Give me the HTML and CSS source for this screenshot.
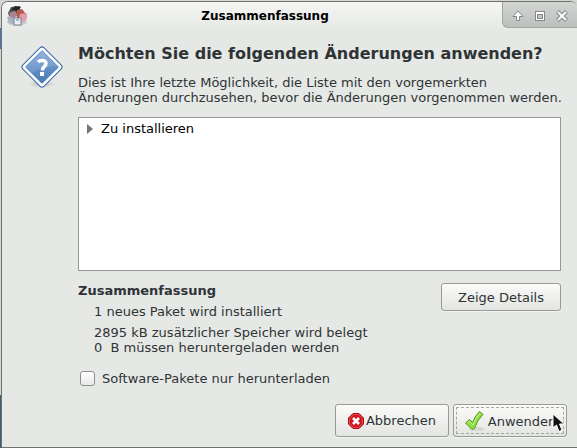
FILE: index.html
```html
<!DOCTYPE html>
<html lang="de">
<head>
  <meta charset="utf-8">
  <title>Zusammenfassung</title>
  <link rel="stylesheet" href="styles.css">
</head>
<body>

<div class="window">
  <header class="titlebar">
    <svg class="app-icon" width="22" height="22" viewBox="0 0 22 22">
      <ellipse cx="11" cy="17" rx="10" ry="4" fill="#c9cccf"/>
      <path d="M1 12 L6 10 L11 13 L11 20 L3 18Z" fill="#a9b3c4"/>
      <path d="M2 8 L5 2 L14 1 L14 6 L10 10 L3 11Z" fill="#55545a"/>
      <path d="M5 5 L9 1 L15 2 L12 6Z" fill="#242428"/>
      <path d="M3 8 L9 6 L12 11 L5 13Z" fill="#a9848d"/>
      <path d="M11 5 L16 4 L20 9 L18 14 L11 13Z" fill="#b8594f"/>
      <path d="M14 9 L21 8 L21 14 L16 18 L13 15Z" fill="#dfa0ae"/>
      <rect x="8" y="13" width="7" height="7" fill="#e8ecf4" stroke="#7d8492"/>
      <rect x="10" y="13" width="3" height="3" fill="#aeb5c2"/>
    </svg>
    <h1 class="title">Zusammenfassung</h1>
    <div class="controls">
      <button class="control" aria-label="Einrollen">
        <svg width="12" height="12" viewBox="0 0 12 12">
          <path d="M6 1 L11 6.500 H7.500 V10.500 H4.500 V6.500 H1Z" fill="#fff" stroke="#85878a"/>
        </svg>
      </button>
      <button class="control" aria-label="Maximieren">
        <svg width="12" height="12" viewBox="0 0 12 12">
          <rect x="1.500" y="1.500" width="9" height="9" fill="#fff" stroke="#85878a"/>
          <rect x="3.500" y="4.500" width="5" height="4" fill="#c4c6c4" stroke="#85878a"/>
        </svg>
      </button>
      <button class="control" aria-label="Schließen">
        <svg width="12" height="12" viewBox="0 0 12 12">
          <path d="M1.500 1.500 L10.500 10.500 M10.500 1.500 L1.500 10.500" stroke="#85878a" stroke-width="4"/>
          <path d="M2 2 L10 10 M10 2 L2 10" stroke="#fff" stroke-width="2"/>
        </svg>
      </button>
    </div>
  </header>

  <main class="content">
    <svg class="question" width="46" height="46" viewBox="0 0 46 46">
      <defs>
        <linearGradient id="blue" x1="0" y1="0" x2="0" y2="1">
          <stop offset="0" stop-color="#82a9d8"/>
          <stop offset="1" stop-color="#4878b5"/>
        </linearGradient>
        <radialGradient id="shadow">
          <stop offset="0" stop-color="#a3a7a5"/>
          <stop offset="1" stop-color="#e6e8e5" stop-opacity="0"/>
        </radialGradient>
      </defs>
      <ellipse cx="23" cy="39" rx="17" ry="5" fill="url(#shadow)"/>
      <rect x="8" y="7" width="30" height="30" rx="3" transform="rotate(45 23 22)" fill="#fff" stroke="#3b68a8"/>
      <rect x="11" y="10" width="24" height="24" rx="1" transform="rotate(45 23 22)" fill="#5c8bc5"/>
      <path d="M23 6 L39 22 L23 38 L7 22Z" fill="url(#blue)"/>
      <path d="M23 6 L38 21 Q24 21 13 28 L7 22Z" fill="#fff" opacity=".12"/>
      <path d="M19 17 Q20.500 15.500 23 15.500 Q27 15.500 27 18.500 Q27 20.500 25 22 Q23.500 23 23.500 25.500" fill="none" stroke="#fff" stroke-width="3.500"/>
      <rect x="21" y="27" width="4" height="4" fill="#fff"/>
    </svg>

    <div class="details">
      <h2 class="heading">Möchten Sie die folgenden Änderungen anwenden?</h2>
      <p class="message">Dies ist Ihre letzte Möglichkeit, die Liste mit den vorgemerkten<br>
        Änderungen durchzusehen, bevor die Änderungen vorgenommen werden.</p>

      <div class="changes">
        <button class="tree-row" aria-expanded="false">
          <svg width="6" height="10" viewBox="0 0 6 10"><path d="M0 0 L6 5 L0 10Z" fill="#747774"/></svg>
          Zu installieren
        </button>
      </div>

      <div class="summary">
        <div>
          <h3 class="summary-title">Zusammenfassung</h3>
          <p class="summary-line">1 neues Paket wird installiert</p>
          <p class="summary-line">2895 kB zusätzlicher Speicher wird belegt<br>
            0&nbsp; B müssen heruntergeladen werden</p>
        </div>
        <button class="button">Zeige Details</button>
      </div>

      <label class="download-only">
        <input type="checkbox" class="checkbox">
        Software-Pakete nur herunterladen
      </label>
    </div>
  </main>

  <footer class="actions">
    <button class="button action">
      <svg width="16" height="16" viewBox="0 0 16 16">
        <path d="M5 .5 H11 L15.500 5 V11 L11 15.500 H5 L.5 11 V5Z" fill="#cf1820" stroke="#a40b12"/>
        <path d="M5.400 1.500 H10.600 L14.500 5.400 V10.600 L10.600 14.500 H5.400 L1.500 10.600 V5.400Z" fill="none" stroke="#e04c50"/>
        <path d="M5 5 L11 11 M11 5 L5 11" stroke="#fff" stroke-width="2.600"/>
      </svg>
      Abbrechen
    </button>
    <button class="button action default">
      <svg width="22" height="20" viewBox="0 0 22 20">
        <ellipse cx="13" cy="18" rx="8" ry="2" fill="#d5d8d3"/>
        <path d="M1.500 12 L5.500 8.500 L8.500 11.500 Q11 5 15.500 .5 L19 3.500 Q13 9 10.500 17.500 L8 18.500Z" fill="#8fe03f" stroke="#4f9a1d"/>
        <path d="M3.500 12 L5.500 10.500 L9 14 Q11.500 7 16 2.300" fill="none" stroke="#c3f58b"/>
      </svg>
      Anwenden
    </button>
    <svg class="pointer" width="13" height="20" viewBox="0 0 13 20">
      <path d="M1 1 V15 L4.500 12 L7 18.500 L10 17 L7.500 11 H12Z" fill="#111" stroke="#fff"/>
    </svg>
  </footer>
</div>

</body>
</html>
```

FILE: styles.css
```css
* {
  box-sizing: border-box;
}

body {
  margin: 0;
  padding: 1px 0 0 1px;
  min-height: 100vh;
  display: flex;
  background: linear-gradient(#d3d5d2 28px, #4a76b0 28px, #4a76b0 49px, #d6d8d5 49px, #d6d8d5 395px, #376070 395px);
  color: #2e3436;
  font-family: "DejaVu Sans", sans-serif;
  font-size: 13px;
  line-height: 15px;
}

h1, h2, h3, p {
  margin: 0;
}

button {
  font: inherit;
  color: inherit;
}

.window {
  flex: 1;
  display: flex;
  flex-direction: column;
  background: #e6e8e5;
  border: 1px solid #6f7270;
  border-right: none;
  border-radius: 7px 7px 0 0;
  overflow: hidden;
}

.titlebar {
  display: flex;
  align-items: flex-start;
  height: 28px;
  padding-left: 4px;
  background: linear-gradient(#f5f6f4, #e7e9e6);
}

.app-icon {
  margin-top: 3px;
}

.title {
  flex: 1;
  color: #000;
  font-size: 12px;
  line-height: 28px;
  text-align: center;
}

.controls {
  display: flex;
  gap: 10px;
  height: 26px;
  padding: 0 9px;
  background: linear-gradient(#d3d5d3, #bcbfbc);
  border: 1px solid #a3a6a3;
  border-width: 0 0 1px 1px;
  border-radius: 0 0 0 6px;
}

.control {
  display: flex;
  align-items: center;
  padding: 2px 0 0;
  background: none;
  border: none;
}

.content {
  display: flex;
  gap: 13px;
  padding: 12px 16px 0 17px;
}

.question {
  flex: none;
  margin-top: 3px;
}

.details {
  flex: 1;
  min-width: 0;
}

.heading {
  font-size: 16px;
  line-height: 24px;
}

.message {
  margin-top: 9px;
  white-space: nowrap;
}

.changes {
  height: 154px;
  margin-top: 12px;
  padding: 3px 8px;
  background: #fff;
  border: 1px solid #959895;
}

.tree-row {
  display: flex;
  align-items: center;
  gap: 8px;
  padding: 0;
  color: #000;
  line-height: 16px;
  background: none;
  border: none;
}

.summary {
  display: flex;
  justify-content: space-between;
  align-items: flex-start;
  padding-top: 12px;
}

.summary-title {
  font-size: 13px;
  line-height: 15px;
}

.summary-line {
  padding: 6px 0 0 16px;
}

.button {
  height: 28px;
  padding: 0 16px;
  background: linear-gradient(#fbfbfa, #e3e5e2);
  border: 1px solid #979a97;
  border-radius: 3px;
  box-shadow: 0 1px #f4f5f3;
}

.download-only {
  display: flex;
  align-items: center;
  gap: 7px;
  margin-top: 16px;
  padding-left: 2px;
}

.checkbox {
  appearance: none;
  width: 15px;
  height: 15px;
  margin: 0;
  background: linear-gradient(#fff, #e8eae7);
  border: 1px solid #8d908d;
  border-radius: 3px;
}

.actions {
  position: relative;
  display: flex;
  justify-content: flex-end;
  gap: 4px;
  margin-top: auto;
  padding: 0 10px 10px;
}

.action {
  display: flex;
  align-items: center;
  justify-content: center;
  gap: 2px;
  width: 114px;
  height: 33px;
  padding: 0;
}

.default {
  padding-top: 1px;
  outline: 1px dashed #a5a8a5;
  outline-offset: -4px;
}

.pointer {
  position: absolute;
  right: 12px;
  top: 9px;
}
```
